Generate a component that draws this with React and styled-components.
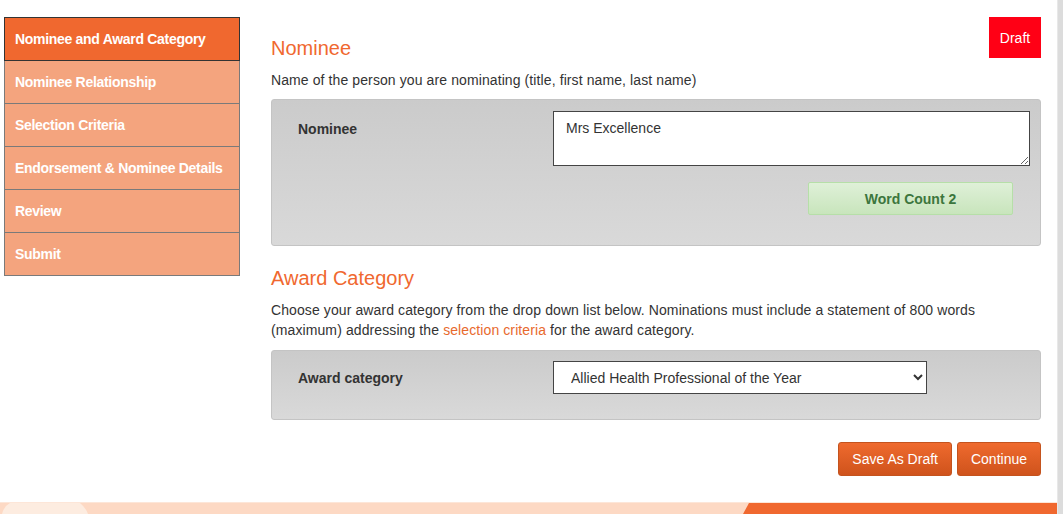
import React, { useState } from "react";
import styled, { createGlobalStyle } from "styled-components";

const GlobalStyle = createGlobalStyle`
  html, body {
    margin: 0;
    padding: 0;
    background: #fff;
    font-family: "Liberation Sans", Arial, sans-serif;
    color: #333;
    overflow: hidden;
  }
`;

const Page = styled.div`
  display: flex;
  width: 1063px;
  height: 514px;
  overflow: hidden;
`;

const Viewport = styled.div`
  flex: 1;
  display: flex;
  flex-direction: column;
`;

const Scroll = styled.div`
  width: 6px;
  background: #dcdcdc;
  border-left: 1px solid #e8e8e8;
`;

const Layout = styled.div`
  display: flex;
  gap: 31px;
  padding: 17px 16px 0 4px;
  height: 486px;
  box-sizing: border-box;
`;

const Sidebar = styled.nav`
  width: 236px;
  flex-shrink: 0;
  display: flex;
  flex-direction: column;
  align-self: flex-start;
`;

const NavItem = styled.a`
  display: flex;
  align-items: center;
  height: 44px;
  box-sizing: border-box;
  padding-left: 10px;
  font-size: 14px;
  font-weight: bold;
  color: #fff;
  text-decoration: none;
  background: ${(p) => (p.$active ? "#f0682f" : "#f4a47e")};
  border: 1px solid ${(p) => (p.$active ? "#333" : "#7a7a7a")};
  margin-top: ${(p) => (p.$first ? 0 : -1)}px;
  letter-spacing: -0.3px;
  position: relative;
  z-index: ${(p) => (p.$active ? 1 : 0)};
`;

const Main = styled.main`
  flex: 1;
  display: flex;
  flex-direction: column;
`;

const HeadRow = styled.div`
  display: flex;
  justify-content: space-between;
  align-items: flex-start;
`;

const Heading = styled.h2`
  margin: ${(p) => p.$top}px 0 0;
  font-size: 20px;
  font-weight: normal;
  line-height: 24px;
  color: #f0682f;
`;

const Badge = styled.div`
  width: 52px;
  height: 41px;
  display: flex;
  align-items: center;
  justify-content: center;
  background: #ff0015;
  color: #fff;
  font-size: 14px;
`;

const Text = styled.p`
  margin: ${(p) => p.$top}px 0 0;
  font-size: 14px;
  line-height: 20px;
  letter-spacing: 0.1px;
  color: #333;
`;

const Link = styled.a`
  color: #e8692d;
  text-decoration: none;
`;

const Panel = styled.div`
  margin-top: ${(p) => p.$top}px;
  display: grid;
  grid-template-columns: 255px 1fr;
  padding: ${(p) => p.$pad};
  background: linear-gradient(#cbcbcb, #d9d9d9);
  border: 1px solid #c4c4c4;
  border-radius: 3px;
`;

const Label = styled.label`
  font-size: 14px;
  font-weight: bold;
  color: #333;
  line-height: 20px;
  padding-top: ${(p) => p.$top}px;
`;

const Field = styled.div`
  display: flex;
  flex-direction: column;
  align-items: flex-end;
`;

const Area = styled.textarea`
  width: 477px;
  height: 55px;
  box-sizing: border-box;
  border: 1px solid #444;
  padding: 8px 12px;
  font-family: "Liberation Sans", Arial, sans-serif;
  font-size: 14px;
  color: #333;
  resize: vertical;
  align-self: flex-start;
`;

const CountButton = styled.button`
  margin: 16px 17px 0 0;
  width: 205px;
  height: 33px;
  border: 1px solid #b6dfa8;
  border-radius: 2px;
  background: linear-gradient(#dff0d8, #c8e5bc);
  color: #3c763d;
  font-family: "Liberation Sans", Arial, sans-serif;
  font-size: 14px;
  font-weight: bold;
`;

const Select = styled.select`
  width: 374px;
  height: 33px;
  border: 1px solid #444;
  background: #fff;
  padding: 0 0 0 13px;
  font-family: "Liberation Sans", Arial, sans-serif;
  font-size: 14px;
  color: #333;
`;

const Actions = styled.div`
  margin-top: 22px;
  display: flex;
  justify-content: flex-end;
  gap: 5px;
`;

const Button = styled.button`
  height: 34px;
  padding: 0 ${(p) => p.$px}px;
  border: 1px solid #c4531e;
  border-radius: 3px;
  background: linear-gradient(#ef6a2e, #cf531c);
  color: #fff;
  font-family: "Liberation Sans", Arial, sans-serif;
  font-size: 14px;
`;

const Footer = styled.footer`
  height: 11px;
  margin-top: auto;
  background: #fdd9c4;
  border-top: 1px solid #fde6d8;
  display: flex;
`;

const FooterArt = styled.svg`
  display: block;
`;

const steps = [
  "Nominee and Award Category",
  "Nominee Relationship",
  "Selection Criteria",
  "Endorsement & Nominee Details",
  "Review",
  "Submit",
];

export default function App() {
  const [nominee, setNominee] = useState("Mrs Excellence");
  const words = nominee.trim() ? nominee.trim().split(/\s+/).length : 0;

  return (
    <Page>
      <GlobalStyle />
      <Viewport>
        <Layout>
          <Sidebar>
            {steps.map((s, i) => (
              <NavItem key={s} $active={i === 0} $first={i === 0}>
                {s}
              </NavItem>
            ))}
          </Sidebar>
          <Main>
            <HeadRow>
              <Heading $top={19}>Nominee</Heading>
              <Badge>Draft</Badge>
            </HeadRow>
            <Text $top={10}>Name of the person you are nominating (title, first name, last name)</Text>
            <Panel $top={9} $pad="11px 10px 30px 26px">
              <Label $top={8}>Nominee</Label>
              <Field>
                <Area value={nominee} onChange={(e) => setNominee(e.target.value)} />
                <CountButton>Word Count {words}</CountButton>
              </Field>
            </Panel>
            <Heading $top={20}>Award Category</Heading>
            <Text $top={10}>
              Choose your award category from the drop down list below. Nominations must include a
              statement of 800 words (maximum) addressing the <Link>selection criteria</Link> for
              the award category.
            </Text>
            <Panel $top={10} $pad="10px 10px 25px 26px">
              <Label $top={7}>Award category</Label>
              <div>
                <Select defaultValue="ahp">
                  <option value="ahp">Allied Health Professional of the Year</option>
                </Select>
              </div>
            </Panel>
            <Actions>
              <Button $px={13}>Save As Draft</Button>
              <Button $px={13}>Continue</Button>
            </Actions>
          </Main>
        </Layout>
        <Footer>
          <FooterArt width="1057" height="11" viewBox="0 0 1057 11">
            <path d="M2 11 Q4 3 10 0 L80 0 Q86 5 88 11 Z" fill="#fdece0" />
            <path d="M749 0 L1057 0 L1057 11 L743 11 Z" fill="#f0682f" />
          </FooterArt>
        </Footer>
      </Viewport>
      <Scroll />
    </Page>
  );
}
